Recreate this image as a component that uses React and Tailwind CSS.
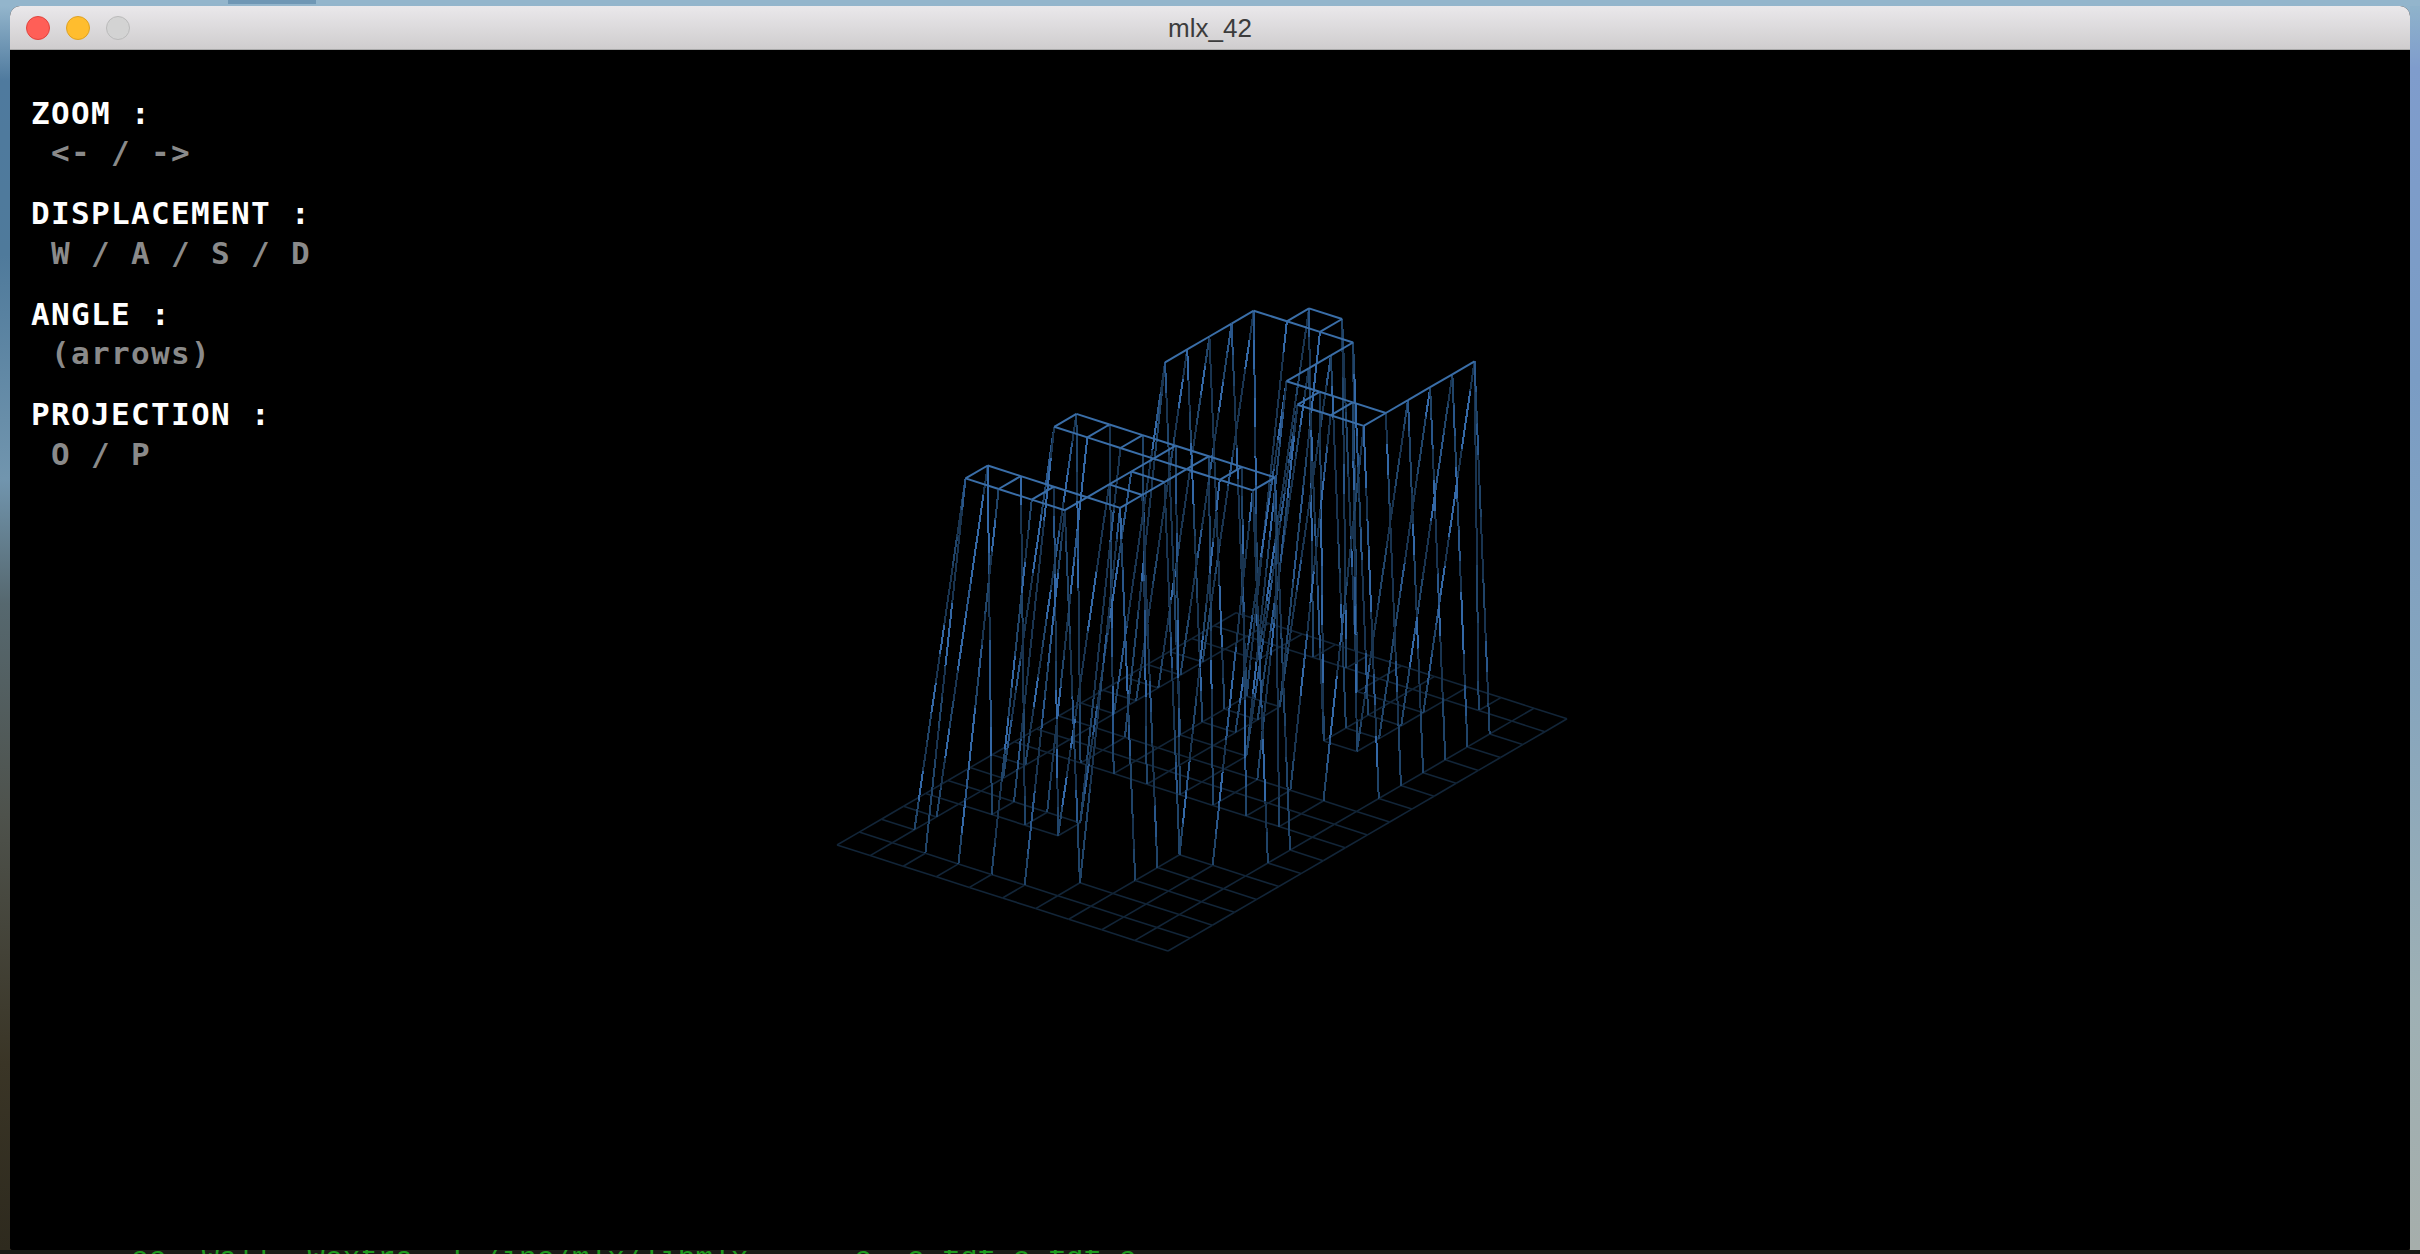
import React from 'react';

// 42.fdf height map
const MAP = [
  '0000000000000000000',
  '0000000000000000000',
  '0011001100011111000',
  '0011001100000001100',
  '0011001100000001100',
  '0011111100001111000',
  '0001111100011000000',
  '0000001100011000000',
  '0000001100011111100',
  '0000000000000000000',
  '0000000000000000000',
].map((row) => row.split('').map(Number));

const project = (c, r, h) => [
  837 + c * 22.17 + r * 33.1 + h * 18,
  845 - c * 12.9 + r * 10.6 - h * 362,
];

const TALL_COLORS = ['#14293f', '#193450', '#204469', '#29568a', '#3468a6'];

function hash(a, b) {
  const v = Math.sin(a * 12.9898 + b * 78.233) * 43758.5453;
  return v - Math.floor(v);
}

function buildLines() {
  const base = [];
  const top = [];
  const tall = [];
  const add = (c1, r1, c2, r2) => {
    const h1 = MAP[r1][c1];
    const h2 = MAP[r2][c2];
    const a = project(c1, r1, h1);
    const b = project(c2, r2, h2);
    if (h1 === h2) {
      (h1 ? top : base).push([a, b]);
    } else {
      tall.push(h1 ? [a, b, c1 * 31 + r1] : [b, a, c2 * 31 + r2 + 7]);
    }
  };
  MAP.forEach((row, r) =>
    row.forEach((_, c) => {
      if (c < 18) add(c, r, c + 1, r);
      if (r < 10) add(c, r, c, r + 1);
    })
  );
  return { base, top, tall };
}

function Wireframe() {
  const { base, top, tall } = buildLines();
  const segments = [];
  tall.forEach(([a, b, seed], i) => {
    const count = 12;
    for (let s = 0; s < count; s++) {
      const t0 = s / count;
      const t1 = (s + 1) / count;
      const n = hash(seed + i, s);
      const idx = s === count - 1 ? 2 : Math.min(Math.floor(n * n * 4.4) + 1, 4);
      segments.push({
        x1: a[0] + (b[0] - a[0]) * t0,
        y1: a[1] + (b[1] - a[1]) * t0,
        x2: a[0] + (b[0] - a[0]) * t1,
        y2: a[1] + (b[1] - a[1]) * t1,
        color: TALL_COLORS[idx],
      });
    }
  });
  return (
    <svg className="absolute inset-0 w-full h-full" viewBox="10 50 2400 1200" fill="none">
      <g stroke="#122538" strokeWidth="1.6">
        {base.map(([a, b], i) => (
          <line key={i} x1={a[0]} y1={a[1]} x2={b[0]} y2={b[1]} />
        ))}
      </g>
      <g strokeWidth="2" shapeRendering="crispEdges">
        {segments.map((s, i) => (
          <line key={i} x1={s.x1} y1={s.y1} x2={s.x2} y2={s.y2} stroke={s.color} />
        ))}
      </g>
      <g stroke="#3a6ea8" strokeWidth="2">
        {top.map(([a, b], i) => (
          <line key={i} x1={a[0]} y1={a[1]} x2={b[0]} y2={b[1]} />
        ))}
      </g>
    </svg>
  );
}

const HELP = [
  ['ZOOM :', ' <- / ->'],
  ['DISPLACEMENT :', ' W / A / S / D'],
  ['ANGLE :', ' (arrows)'],
  ['PROJECTION :', ' O / P'],
];

export default function App() {
  return (
    <div className="h-[1254px] w-[2420px] overflow-hidden flex flex-col bg-[linear-gradient(180deg,#93b5cc_0%,#6d8fae_45%,#55605f_75%,#2e2a1e_100%)]">
      <div className="h-[6px] shrink-0 bg-[#93b5cc] pl-[228px]">
        <div className="h-[4px] w-[88px] bg-[#6f97b5]"></div>
      </div>

      <div className="h-[1244px] shrink-0 flex">
        <div className="w-[10px] bg-[linear-gradient(180deg,#93b5cc_0%,#4f7a9e_6%,#4f7a9b_20%,#7195ae_38%,#56686f_48%,#4e524c_65%,#3a3526_85%,#2e2a1e_100%)]"></div>

        <div className="w-[2400px] flex flex-col rounded-t-[10px] rounded-b-[3px] overflow-hidden bg-black">
          <div className="h-[44px] shrink-0 relative flex items-center justify-center pt-[2px] border-b border-[#a9a9a9] bg-[linear-gradient(180deg,#eae8eb,#cfcdce)]">
            <div className="absolute left-[16px] top-[10px] flex gap-[16px]">
              <span className="w-[24px] h-[24px] rounded-full bg-[#ff5f57] border border-[#e0443e]"></span>
              <span className="w-[24px] h-[24px] rounded-full bg-[#ffbd2e] border border-[#dea123]"></span>
              <span className="w-[24px] h-[24px] rounded-full bg-[#d3d3d3] border border-[#bababa]"></span>
            </div>
            <span className="text-[26px] text-[#3c3c3c] font-['Liberation_Sans',sans-serif]">mlx_42</span>
          </div>

          <div className="relative flex-1 bg-black">
            <Wireframe />
            <div className="relative pl-[21px] pt-[43.5px] flex flex-col gap-[21.5px] font-['DejaVu_Sans_Mono',monospace] font-bold text-[31px] tracking-[1.33px] leading-[39.5px] whitespace-pre">
              {HELP.map(([title, keys]) => (
                <div key={title}>
                  <div className="text-white">{title}</div>
                  <div className="text-[#8a8a8a]">{keys}</div>
                </div>
              ))}
            </div>
          </div>
        </div>

        <div className="w-[10px] bg-[linear-gradient(180deg,#8fb3cb_0%,#7f9ccc_5%,#7a9cc4_30%,#86a5bd_55%,#9eb0b4_80%,#a6aeab_100%)]"></div>
      </div>

      <div className="h-[4px] shrink-0 overflow-hidden bg-[#1b1a16] pl-[131px]">
        <div className="font-['Liberation_Mono',monospace] text-[29.4px] leading-[32px] -mt-[6px] text-[#1f9a1f] whitespace-pre">
          {'cc -Wall -Wextra -I./inc/mlx/libmlx     -c -o fdf.o fdf.c'}
        </div>
      </div>
    </div>
  );
}
